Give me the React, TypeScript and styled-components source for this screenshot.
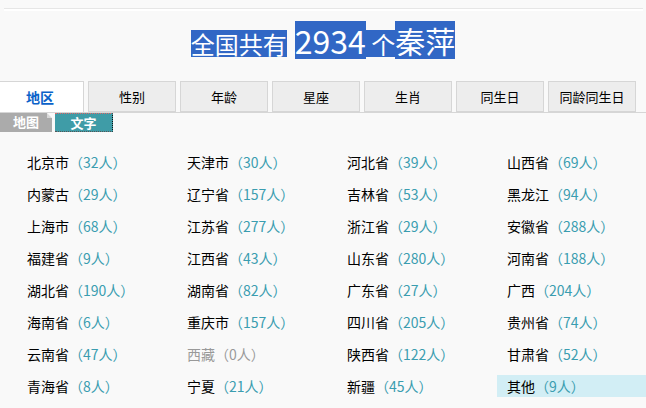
import React, { useState } from "react";
import styled, { createGlobalStyle } from "styled-components";

const GlobalStyle = createGlobalStyle`
  html, body {
    margin: 0;
    padding: 0;
    overflow: hidden;
    background: #f9f9f9;
  }
  body {
    font-family: "Noto Sans CJK SC", "Noto Sans", sans-serif;
    color: #000;
  }
`;

const Page = styled.div`
  width: 646px;
  height: 408px;
  overflow: hidden;
`;

const TopRule = styled.div`
  margin: 8px 3px 0 4px;
  border-top: 1px solid #e6e6e6;
  border-bottom: 2px solid #ffffff;
`;

const Title = styled.h1`
  margin: 10px 0 22px;
  display: flex;
  justify-content: center;
  align-items: flex-end;
  height: 38px;
  font-weight: normal;
  color: #fff;
`;

interface ISel {
  size: number;
  tall?: boolean;
  gap?: number;
}

const Sel = styled.span<ISel>`
  display: inline-block;
  background: #3167c5;
  font-size: ${(p) => p.size}px;
  height: ${(p) => (p.tall ? 38 : 27)}px;
  line-height: ${(p) => (p.tall ? 38 : 27)}px;
  margin-right: ${(p) => p.gap || 0}px;
  margin-bottom: ${(p) => (p.tall ? 0 : 2)}px;
  white-space: pre;
`;

const Tabs = styled.div`
  display: flex;
  gap: 4px;
  height: 31px;
  border-bottom: 1px solid #d6d6d6;
`;

interface ITab {
  active?: boolean;
}

const Tab = styled.button<ITab>`
  box-sizing: border-box;
  width: 88px;
  height: 31px;
  margin-left: ${(p) => (p.active ? "-4px" : "0")};
  padding: 0;
  border: 1px solid #d6d6d6;
  border-bottom: ${(p) => (p.active ? "none" : "1px solid #d6d6d6")};
  background: ${(p) => (p.active ? "#ffffff" : "#ededed")};
  color: ${(p) => (p.active ? "#0a62c9" : "#000")};
  font-family: inherit;
  font-size: ${(p) => (p.active ? 14 : 13)}px;
  font-weight: ${(p) => (p.active ? "bold" : "normal")};
  cursor: pointer;
`;

const SubTabs = styled.div`
  display: flex;
  gap: 3px;
  height: 19px;
`;

interface ISub {
  on?: boolean;
}

const SubTab = styled.span<ISub>`
  position: relative;
  box-sizing: border-box;
  width: ${(p) => (p.on ? 58 : 52)}px;
  height: 19px;
  line-height: 18px;
  text-align: center;
  color: #fff;
  font-size: 13px;
  font-weight: bold;
  background: ${(p) => (p.on ? "#3f9ca7" : "#ababab")};
  border-top: ${(p) => (p.on ? "1px dotted #e06a6a" : "none")};
  border-right: ${(p) => (p.on ? "1px dotted #111" : "none")};
  border-bottom: ${(p) => (p.on ? "1px dotted #555" : "none")};
  ${(p) =>
    p.on
      ? ""
      : `
    &::after {
      content: "";
      position: absolute;
      top: 0;
      right: 0;
      border-style: solid;
      border-width: 0 5px 5px 0;
      border-color: #f9f9f9 #f9f9f9 #d8d8d8 #d8d8d8;
    }
  `}
`;

const List = styled.ul`
  list-style: none;
  margin: 19px 0 0;
  padding: 0 0 0 17px;
  display: grid;
  grid-template-columns: repeat(4, 160px);
  row-gap: 10px;
`;

interface ICell {
  hot?: boolean;
}

const Cell = styled.li<ICell>`
  height: 22px;
  line-height: 22px;
  padding-left: 10px;
  font-size: 14px;
  white-space: nowrap;
  background: ${(p) => (p.hot ? "#d2eef5" : "transparent")};
`;

interface IName {
  empty?: boolean;
}

const Name = styled.span<IName>`
  color: ${(p) => (p.empty ? "#999" : "#000")};
`;

const Count = styled.span<IName>`
  color: ${(p) => (p.empty ? "#999" : "#3a9db0")};
`;

const regions: [string, number][] = [
  ["北京市", 32], ["天津市", 30], ["河北省", 39], ["山西省", 69],
  ["内蒙古", 29], ["辽宁省", 157], ["吉林省", 53], ["黑龙江", 94],
  ["上海市", 68], ["江苏省", 277], ["浙江省", 29], ["安徽省", 288],
  ["福建省", 9], ["江西省", 43], ["山东省", 280], ["河南省", 188],
  ["湖北省", 190], ["湖南省", 82], ["广东省", 27], ["广西", 204],
  ["海南省", 6], ["重庆市", 157], ["四川省", 205], ["贵州省", 74],
  ["云南省", 47], ["西藏", 0], ["陕西省", 122], ["甘肃省", 52],
  ["青海省", 8], ["宁夏", 21], ["新疆", 45], ["其他", 9],
];

const tabs = ["地区", "性别", "年龄", "星座", "生肖", "同生日", "同龄同生日"];

const App = () => {
  const [activeIndex, setActiveIndex] = useState(0);
  const [mode, setMode] = useState(1);
  return (
    <Page>
      <GlobalStyle />
      <TopRule />
      <Title>
        <Sel size={24} gap={8}>全国共有</Sel>
        <Sel size={32} tall>2934</Sel>
        <Sel size={24}>{" 个"}</Sel>
        <Sel size={30} tall>秦萍</Sel>
      </Title>
      <Tabs>
        {tabs.map((t, i) => (
          <Tab key={t} active={i === activeIndex} onClick={() => setActiveIndex(i)}>
            {t}
          </Tab>
        ))}
      </Tabs>
      <SubTabs>
        <SubTab on={mode === 0} onClick={() => setMode(0)}>地图</SubTab>
        <SubTab on={mode === 1} onClick={() => setMode(1)}>文字</SubTab>
      </SubTabs>
      <List>
        {regions.map(([name, n], i) => (
          <Cell key={name} hot={i === regions.length - 1}>
            <Name empty={n === 0}>{name}</Name>
            <Count empty={n === 0}>（{n}人）</Count>
          </Cell>
        ))}
      </List>
    </Page>
  );
};

export default App;
